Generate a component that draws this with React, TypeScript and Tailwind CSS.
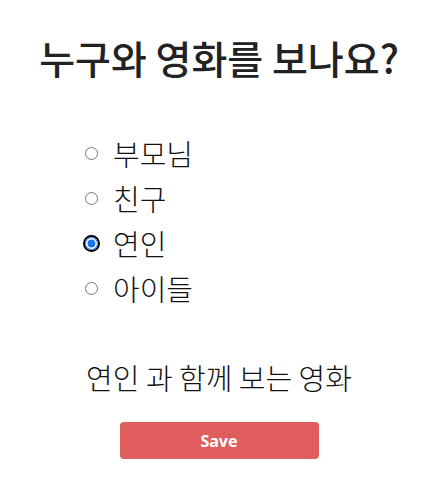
import React, { useState } from "react";

const options = ["부모님", "친구", "연인", "아이들"];

export default function App() {
  const [choice, setChoice] = useState("연인");

  return (
    <div
      className="flex flex-col items-center bg-white text-[#222] pt-[30px] pl-[8px]"
      style={{ fontFamily: '"Noto Sans CJK KR", "Noto Sans", sans-serif' }}
    >
      <h1 className="text-[39px] font-medium leading-[54px] text-[#222]">누구와 영화를 보나요?</h1>

      <div className="w-full pl-[75px] mt-[47px] flex flex-col">
        {options.map((opt) => (
          <label key={opt} className="flex items-center h-[45px] text-[29px] font-light text-[#111]">
            <span
              className={
                "flex items-center justify-center w-[17px] h-[17px] mr-[13px] rounded-full border-2 " +
                (choice === opt ? "border-black" : "border-transparent")
              }
            >
              <input
                type="radio"
                name="who"
                checked={choice === opt}
                onChange={() => setChoice(opt)}
                className="w-[13px] h-[13px] m-0 accent-[#1a73e8] outline-none shrink-0"
              />
            </span>
            {opt}
          </label>
        ))}
      </div>

      <p className="mt-[46px] text-[29px] font-light leading-[40px] text-[#111]">{choice} 과 함께 보는 영화</p>

      <button
        className="mt-[25px] w-[199px] h-[37px] rounded-[4px] bg-[#e05d5d] text-white text-[16px] font-bold"
        style={{ fontFamily: '"Noto Sans", sans-serif' }}
      >
        Save
      </button>
    </div>
  );
}
